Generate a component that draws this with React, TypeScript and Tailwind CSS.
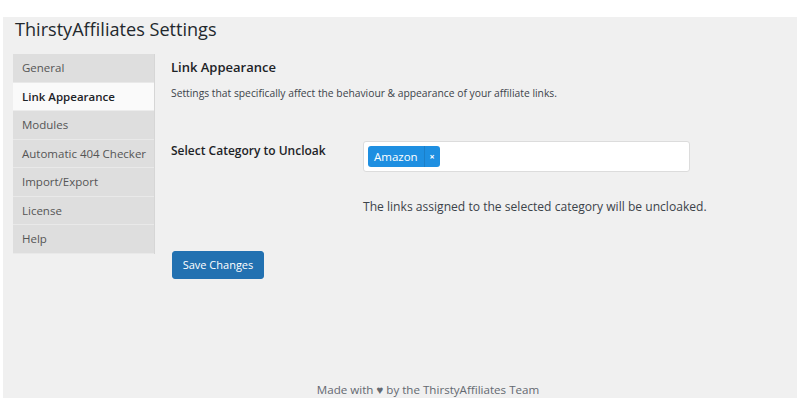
import React from "react";

const tabs = [
  "General",
  "Link Appearance",
  "Modules",
  "Automatic 404 Checker",
  "Import/Export",
  "License",
  "Help",
];

export default function App() {
  return (
    <div
      className="w-[800px] h-[400px] bg-white overflow-hidden"
      style={{ fontFamily: '"Open Sans", "Noto Sans", sans-serif' }}
    >
      <div className="ml-[3px] mt-[17px] w-[794px] h-[381px] bg-[#f0f0f0] relative flex flex-col">
        <h1 className="pl-[12px] h-[37px] text-[18.1px] leading-[24px] text-[#23282d] font-normal">
          ThirstyAffiliates Settings
        </h1>
        <div className="flex items-start pl-[10px]">
          <div className="w-[142px] flex flex-col border-r border-[#d6d6d6]">
            {tabs.map((t, i) => (
              <div
                key={t}
                className={
                  i === 1
                    ? "h-[28.5px] flex items-center pl-[9px] text-[11.5px] font-semibold text-[#1d2327] bg-[#fafafa] border-b border-[#ececec]"
                    : "h-[28.5px] flex items-center pl-[9px] text-[11.5px] text-[#555] bg-[#dedede] border-b border-[#e9e9e9]"
                }
              >
                {t}
              </div>
            ))}
          </div>
          <div className="pl-[16px] flex flex-col">
            <h2 className="mt-[3px] text-[13px] leading-[20px] font-semibold text-[#1d2327]">
              Link Appearance
            </h2>
            <p className="mt-[9px] text-[10.3px] leading-[14px] text-[#3c434a]">
              Settings that specifically affect the behaviour &amp; appearance of your affiliate links.
            </p>
            <div className="flex mt-[41px]">
              <div className="w-[192px] pt-[1px] text-[12px] leading-[18px] font-semibold text-[#1d2327]">
                Select Category to Uncloak
              </div>
              <div className="flex flex-col">
                <div className="w-[327px] h-[31px] bg-white border border-[#dcdcdc] rounded-[3px] flex items-center pl-[4px]">
                  <div className="h-[21px] flex items-stretch bg-[#1e8fe1] rounded-[3px] text-white text-[11.5px]">
                    <span className="px-[6px] flex items-center">Amazon</span>
                    <span className="w-[16px] flex items-center justify-center border-l border-[#1b7fc8] text-[9px] font-bold">
                      ×
                    </span>
                  </div>
                </div>
                <p className="mt-[27px] text-[12.1px] leading-[16px] text-[#3c434a]">
                  The links assigned to the selected category will be uncloaked.
                </p>
              </div>
            </div>
            <button className="mt-[36px] ml-[1px] w-[92px] h-[28px] bg-[#2271b1] text-white text-[11px] rounded-[3px] border border-[#2271b1]">
              Save Changes
            </button>
          </div>
        </div>
        <div className="absolute bottom-0 left-0 right-0 text-center pl-[56px] text-[11.6px] leading-[16px] text-[#646970]">
          Made with ♥ by the ThirstyAffiliates Team
        </div>
      </div>
    </div>
  );
}
